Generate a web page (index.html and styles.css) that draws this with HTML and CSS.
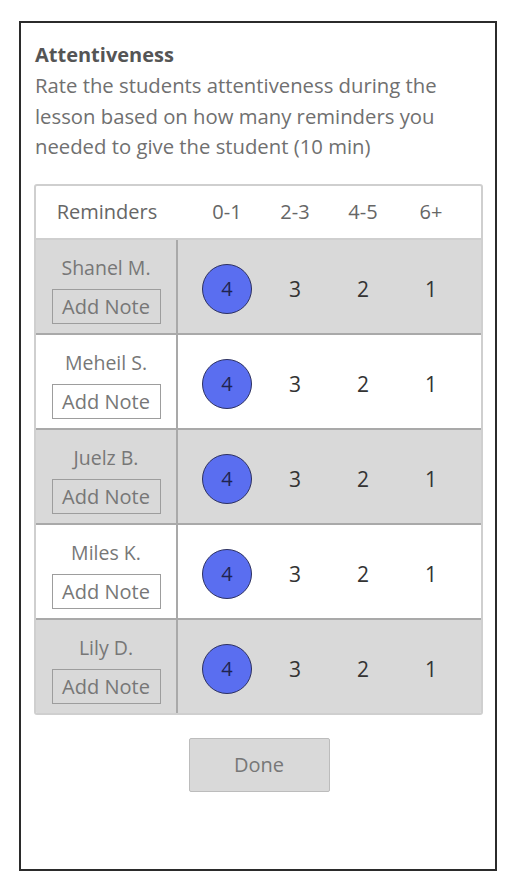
FILE: index.html
```html
<!DOCTYPE html>
<html>
<head>
<meta charset="utf-8">
<link rel="stylesheet" href="styles.css">
</head>
<body>
<div class="frame">
  <h1 class="title">Attentiveness</h1>
  <p class="desc">Rate the students attentiveness during the lesson based on how many reminders you needed to give the student (10 min)</p>
  <div class="table">
    <div class="row head">
      <div class="name-cell">Reminders</div>
      <div class="scores">
        <span>0-1</span><span>2-3</span><span>4-5</span><span>6+</span>
      </div>
    </div>
    <div class="row grey">
      <div class="name-cell"><div class="name">Shanel M.</div><button class="note">Add Note</button></div>
      <div class="scores"><span><b class="dot">4</b></span><span>3</span><span>2</span><span>1</span></div>
    </div>
    <div class="row">
      <div class="name-cell"><div class="name">Meheil S.</div><button class="note">Add Note</button></div>
      <div class="scores"><span><b class="dot">4</b></span><span>3</span><span>2</span><span>1</span></div>
    </div>
    <div class="row grey">
      <div class="name-cell"><div class="name">Juelz B.</div><button class="note">Add Note</button></div>
      <div class="scores"><span><b class="dot">4</b></span><span>3</span><span>2</span><span>1</span></div>
    </div>
    <div class="row">
      <div class="name-cell"><div class="name">Miles K.</div><button class="note">Add Note</button></div>
      <div class="scores"><span><b class="dot">4</b></span><span>3</span><span>2</span><span>1</span></div>
    </div>
    <div class="row grey last">
      <div class="name-cell"><div class="name">Lily D.</div><button class="note">Add Note</button></div>
      <div class="scores"><span><b class="dot">4</b></span><span>3</span><span>2</span><span>1</span></div>
    </div>
  </div>
  <div class="actions"><button class="done">Done</button></div>
</div>
</body>
</html>
```
FILE: styles.css
```css
* { box-sizing: border-box; }
body {
  margin: 0;
  background: #fff;
  font-family: "Open Sans", "Noto Sans", sans-serif;
}
.frame {
  margin: 21px 0 0 19px;
  width: 478px;
  height: 850px;
  border: 2px solid #2b2b2b;
  padding: 17px 13px 0 13px;
}
.title {
  margin: 0 0 0 1px;
  font-size: 20px;
  font-weight: 700;
  line-height: 30px;
  color: #555;
}
.desc {
  margin: 0 0 0 1px;
  font-size: 20.3px;
  line-height: 30.5px;
  color: #707070;
}
.table {
  margin-top: 22px;
  width: 449px;
  border: 2px solid #cfcfcf;
  border-radius: 3px;
  overflow: hidden;
}
.row {
  display: flex;
  height: 95px;
  border-bottom: 2px solid #a9a9a9;
}
.row.last { height: 93px; border-bottom: none; }
.row.head {
  height: 54px;
  border-bottom: 2px solid #cfcfcf;
  align-items: center;
}
.grey { background: #d9d9d9; }
.name-cell {
  width: 142px;
  flex: none;
  display: flex;
  flex-direction: column;
  align-items: center;
  padding-top: 14px;
  border-right: 2px solid #a9a9a9;
  color: #777;
  font-size: 19.5px;
}
.head .name-cell {
  border-right: none;
  padding-top: 0;
  color: #666;
  font-size: 20px;
}
.name { line-height: 28px; }
.note {
  margin-top: 7px;
  width: 109px;
  height: 35px;
  padding: 0;
  background: transparent;
  border: 1.5px solid #9d9d9d;
  font-family: inherit;
  font-size: 20px;
  color: #777;
}
.row:not(.grey) .note { background: #fff; }
.scores {
  flex: 1;
  display: flex;
  align-items: center;
  padding: 5px 15px 0 15px;
  color: #333;
  font-size: 21px;
}
.head .scores { color: #666; font-size: 20px; padding-top: 0; }
.scores span {
  width: 68px;
  text-align: center;
  display: flex;
  justify-content: center;
}
.dot {
  width: 50px;
  height: 50px;
  border-radius: 50%;
  background: #5a6ef0;
  border: 1.5px solid #2d3160;
  color: #1f2450;
  font-weight: 400;
  font-size: 20px;
  display: flex;
  align-items: center;
  justify-content: center;
}
.actions {
  display: flex;
  justify-content: center;
  margin-top: 23px;
  padding-left: 2px;
}
.done {
  width: 141px;
  height: 54px;
  background: #d9d9d9;
  border: 1.5px solid #bcbcbc;
  border-radius: 2px;
  font-family: inherit;
  font-size: 20px;
  color: #777;
}
```
